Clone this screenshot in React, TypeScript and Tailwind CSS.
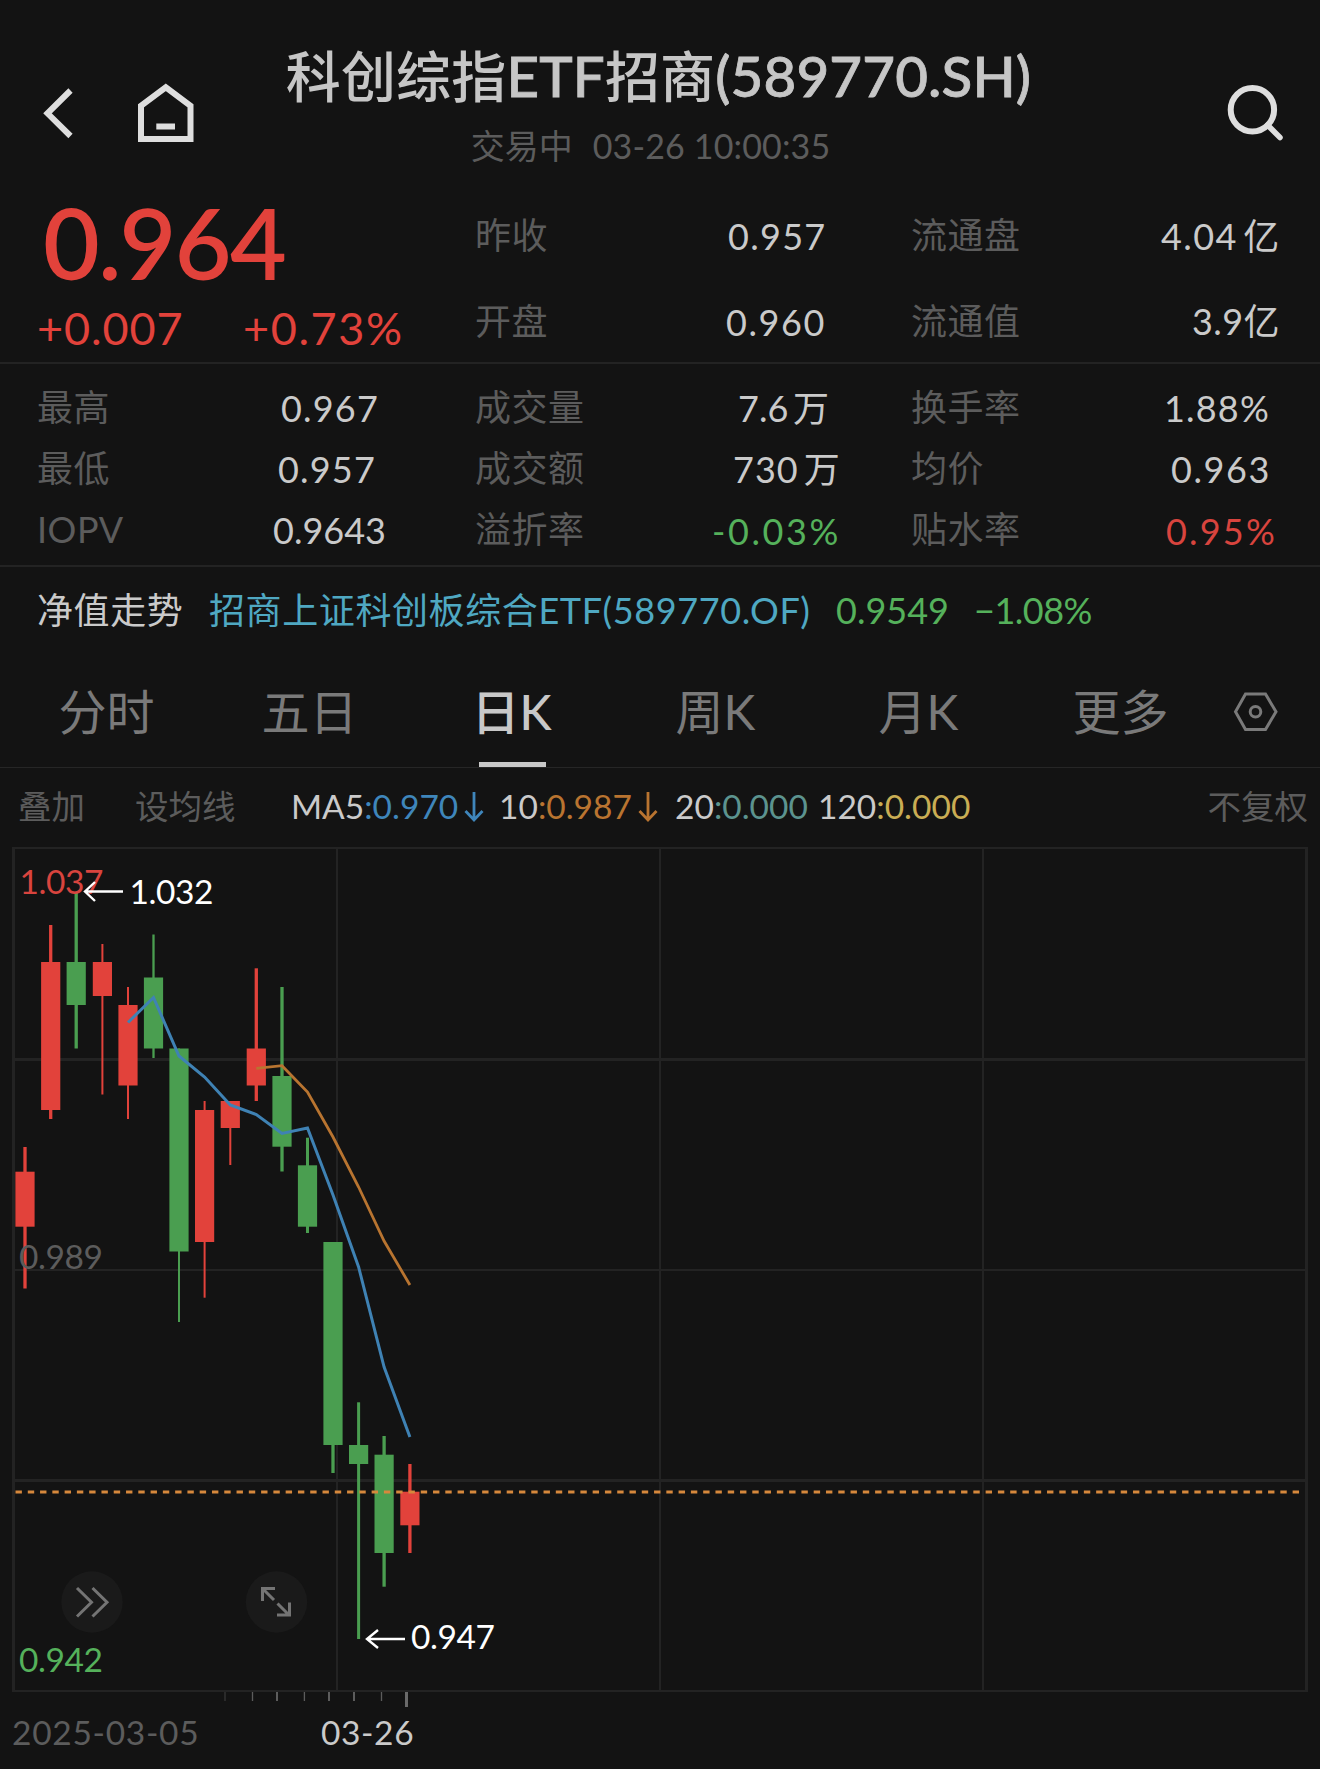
import React from 'react';

const UP = '#e2423b';
const DOWN = '#4a9e50';

type Cell = { label: string; value: string; color?: string; className: string };

const summary: Cell[] = [
  { label: '昨收', value: '0.957', className: 'ml-[108px] pt-px tracking-[1.3px]' },
  { label: '流通盘', value: '4.04 亿', className: 'ml-[105px] pt-px tracking-[1.4px] [word-spacing:-5px]' },
  { label: '开盘', value: '0.960', className: 'ml-[106px] pt-px tracking-[1.6px]' },
  { label: '流通值', value: '3.9亿', className: 'ml-[136px] tracking-[0.4px]' },
];

const details: Cell[] = [
  { label: '最高', value: '0.967', className: 'ml-[99px] pt-[2px] tracking-[1.2px]' },
  { label: '成交量', value: '7.6 万', className: 'ml-[118px] pt-[2px] [word-spacing:-4.5px]' },
  { label: '换手率', value: '1.88%', className: 'ml-[108px] pt-[2px] tracking-[1.2px]' },
  { label: '最低', value: '0.957', className: 'ml-[96px] pt-[3px] tracking-[1.2px]' },
  { label: '成交额', value: '730 万', className: 'ml-[113px] pt-[3px] tracking-[1px] [word-spacing:-5px]' },
  { label: '均价', value: '0.963', className: 'ml-[115px] pt-[3px] tracking-[1.6px]' },
  { label: 'IOPV', value: '0.9643', className: 'ml-[91px] pt-[2px]' },
  { label: '溢折率', value: '-0.03%', color: 'text-[#55b15b]', className: 'ml-[92px] pt-[4px] tracking-[2.6px]' },
  { label: '贴水率', value: '0.95%', color: 'text-[#d8443e]', className: 'ml-[110px] pt-[4px] tracking-[2.2px]' },
];

const tabs = ['分时', '五日', '日K', '周K', '月K', '更多'];

const averages = [
  { name: 'MA5', value: '0.970', arrow: true, box: 'w-[208px]', color: 'text-[#3f86bb]' },
  { name: '10', value: '0.987', arrow: true, box: 'w-[176px]', color: 'text-[#b97430]' },
  { name: '20', value: '0.000', arrow: false, box: 'w-[143px]', color: 'text-[#5c938f]' },
  { name: '120', value: '0.000', arrow: false, box: 'w-[160px]', color: 'text-[#c9ad54]' },
];

// x centre, high, body top, body bottom, low, wick width
const candles: { x: number; high: number; top: number; bottom: number; low: number; w: number; up: boolean }[] = [
  { x: 25, high: 1147, top: 1171.7, bottom: 1226.7, low: 1288.5, w: 3.3, up: true },
  { x: 50.7, high: 925, top: 962, bottom: 1110, low: 1119, w: 3.3, up: true },
  { x: 76.2, high: 893, top: 962, bottom: 1005, low: 1048.5, w: 3.3, up: false },
  { x: 102.4, high: 944, top: 962, bottom: 996, low: 1094.5, w: 2, up: true },
  { x: 128, high: 987, top: 1005, bottom: 1085.5, low: 1119, w: 2, up: true },
  { x: 153.5, high: 934.5, top: 977.5, bottom: 1048.5, low: 1058, w: 2.3, up: false },
  { x: 179, high: 1048.5, top: 1048.5, bottom: 1251.5, low: 1322, w: 2, up: false },
  { x: 204.6, high: 1101, top: 1110, bottom: 1242, low: 1297.7, w: 2, up: true },
  { x: 230.3, high: 1101, top: 1101, bottom: 1128, low: 1165, w: 2, up: true },
  { x: 256.3, high: 968.3, top: 1048.5, bottom: 1085.5, low: 1101, w: 3.3, up: true },
  { x: 282, high: 987, top: 1076, bottom: 1146.7, low: 1171.5, w: 3.3, up: false },
  { x: 307.5, high: 1137.7, top: 1165.3, bottom: 1226.7, low: 1233, w: 3, up: false },
  { x: 333, high: 1242, top: 1242, bottom: 1445, low: 1473, w: 3.3, up: false },
  { x: 358.6, high: 1402.3, top: 1445, bottom: 1464, low: 1639, w: 3, up: false },
  { x: 384.1, high: 1436, top: 1454.7, bottom: 1553, low: 1586.7, w: 3.3, up: false },
  { x: 409.9, high: 1464, top: 1491.7, bottom: 1525.3, low: 1553, w: 3.3, up: true },
];

const ma5 =
  '128,1022.5 153.5,997.5 179,1056 204.6,1077 230.3,1105 256.3,1114.5 282,1133.5 307.5,1128 333,1195 358.6,1267 384.1,1367 409.9,1437';
const ma10 = '256.3,1068.3 282,1065.7 307.5,1092 333,1137 358.6,1187 384.1,1241 409.9,1285';

const ticks = [
  { x: 225, w: 1.5, h: 9, color: '#333333' },
  { x: 252.5, w: 1.3, h: 9, color: '#5c5c5c' },
  { x: 277, w: 2, h: 9, color: '#5c5c5c' },
  { x: 304.4, w: 1.3, h: 9, color: '#5c5c5c' },
  { x: 329, w: 2, h: 9, color: '#5c5c5c' },
  { x: 354, w: 2, h: 9, color: '#5c5c5c' },
  { x: 381.5, w: 1.3, h: 9, color: '#5c5c5c' },
  { x: 406.5, w: 3, h: 15, color: '#6a6a6a' },
];

function Header() {
  return (
    <header className="flex h-[180px] justify-between">
      <div className="flex w-[220px] pt-[80px]">
        <svg className="h-[66px] w-[100px]" viewBox="0 80 100 66" fill="none" stroke="#dedede" strokeWidth="6">
          <path d="M70.5 90.5 L47.5 113.3 L70.5 136" />
        </svg>
        <svg className="h-[66px] w-[120px]" viewBox="100 80 120 66" fill="none" stroke="#dedede" strokeWidth="6">
          <path d="M141 139 V105.8 L165.8 87.3 L190.5 105.8 V139 Z" />
          <path d="M156.3 126.5 H175" />
        </svg>
      </div>
      <div className="flex flex-1 flex-col items-center whitespace-nowrap">
        <h1 className="mt-[35px] mr-[3px] h-[80px] text-[55px]/[80px] font-medium tracking-[0.15px] text-[#c6c6c6]">
          科创综指<span className="text-[56.5px] [-webkit-text-stroke:0.8px]">ETF</span>招商
          <span className="text-[56.5px] [-webkit-text-stroke:0.8px]">(589770.SH)</span>
        </h1>
        <p className="mt-[7px] mr-[19px] flex gap-[20px] text-[34px]/[48px] text-[#5c5c5c]">
          <span>交易中</span>
          <span className="tracking-[0.15px]">03-26 10:00:35</span>
        </p>
      </div>
      <div className="flex w-[220px] justify-end pt-[80px]">
        <svg className="h-[66px] w-[120px]" viewBox="1200 80 120 66" fill="none" stroke="#dedede" strokeWidth="6">
          <circle cx="1252.4" cy="109.7" r="21.7" />
          <path d="M1267.5 125 L1280 137.5" strokeWidth="5.5" strokeLinecap="round" />
        </svg>
      </div>
    </header>
  );
}

function Field({ label, value, color = 'text-[#cacaca]', className }: Cell) {
  return (
    <div className="flex items-center whitespace-nowrap">
      <span className="w-[145px] shrink-0 tracking-[0.5px] text-[#5c5c5c]">{label}</span>
      <span className={`${color} ${className}`}>{value}</span>
    </div>
  );
}

function Quote() {
  return (
    <section className="text-[36px]">
      <div className="flex h-[184px] border-b-2 border-[#232323]">
        <div className="w-[475px] whitespace-nowrap text-[#e2423b]">
          <div className="mt-[3px] ml-[43px] h-[118px] text-[98px]/[118px] font-semibold tracking-[-1.7px]">0.964</div>
          <div className="ml-[37px] flex text-[45px]/[54px]">
            <span className="w-[206px] tracking-[0.9px]">+0.007</span>
            <span className="tracking-[1.6px]">+0.73%</span>
          </div>
        </div>
        <div className="grid flex-1 auto-rows-[86px] grid-cols-[436px_1fr] pt-[12px]">
          {summary.map((cell) => (
            <Field key={cell.label} {...cell} />
          ))}
        </div>
      </div>
      <div className="grid h-[203px] auto-rows-[61px] grid-cols-[438px_436px_1fr] border-b-2 border-[#232323] pt-[12px] pl-[37px]">
        {details.map((cell) => (
          <Field key={cell.label} {...cell} />
        ))}
      </div>
      <div className="flex h-[86px] items-center pl-[37px] whitespace-nowrap">
        <span className="w-[172px] tracking-[0.6px] text-[#cacaca]">净值走势</span>
        <span className="w-[627px] tracking-[0.6px] text-[#4fa8c2]">招商上证科创板综合ETF(589770.OF)</span>
        <span className="w-[138px] text-[#55b15b]">0.9549</span>
        <span className="tracking-[-0.5px] text-[#55b15b]">−1.08%</span>
      </div>
    </section>
  );
}

function Tabs() {
  return (
    <nav className="mt-[2px] flex h-[113px] border-b border-[#262626] pl-[5px] text-[48px]">
      {tabs.map((tab) => {
        const active = tab === '日K';
        return (
          <button
            key={tab}
            className={`flex w-[203px] flex-col items-center justify-between pt-[21px] ${active ? 'font-medium text-[#c8c8c8]' : 'text-[#7a7a7a]'}`}
          >
            <span className={`leading-[72px] ${active || tab === '更多' ? 'pr-[2px]' : ''}`}>{tab}</span>
            {active && <span className="h-[5px] w-[67px] bg-[#c8c8c8]" />}
          </button>
        );
      })}
      <svg className="mt-[30px] ml-[2px] h-[54px] w-[60px]" viewBox="1225 685 60 54" fill="none" stroke="#7a7a7a" strokeWidth="3">
        <path d="M1245.5 694 H1265.5 L1276 711.7 L1265.5 729.5 H1245.5 L1235.5 711.7 Z" />
        <circle cx="1255.5" cy="711.7" r="5.3" />
      </svg>
    </nav>
  );
}

function Averages() {
  return (
    <div className="flex h-[79px] items-center pr-[12px] pb-[2px] pl-[18px] text-[33.5px] whitespace-nowrap text-[#5c5c5c]">
      <span className="w-[117px]">叠加</span>
      <span className="w-[156px]">设均线</span>
      {averages.map((avg) => (
        <span key={avg.name} className={`flex items-center ${avg.box} ${avg.color}`}>
          <span className="text-[#cacaca]">{avg.name}</span>:{avg.value}
          {avg.arrow && (
            <svg className="ml-[6px] h-[32px] w-[20px]" viewBox="0 0 20 32" fill="none" stroke="currentColor" strokeWidth="2.8">
              <path d="M10 1 V29 M1.5 20 L10 29 L18.5 20" />
            </svg>
          )}
        </span>
      ))}
      <span className="ml-auto">不复权</span>
    </div>
  );
}

function Chart() {
  return (
    <svg className="block h-[922px] w-full text-[33.5px]" viewBox="0 847 1320 922">
      <g fill="#232323">
        <rect x="12" y="847" width="1296" height="2" />
        <rect x="12" y="1690" width="1296" height="2" />
        <rect x="12" y="847" width="3" height="845" />
        <rect x="1305" y="847" width="3" height="845" />
        <rect x="336" y="849" width="2" height="841" />
        <rect x="659" y="849" width="2" height="841" />
        <rect x="982" y="849" width="2" height="841" />
        <rect x="15" y="1058" width="1290" height="3" />
        <rect x="15" y="1269" width="1290" height="2" />
        <rect x="15" y="1479" width="1290" height="3" />
      </g>

      {candles.map((c) => (
        <g key={c.x} fill={c.up ? UP : DOWN}>
          <rect x={c.x - c.w / 2} y={c.high} width={c.w} height={c.low - c.high} />
          <rect x={c.x - 9.6} y={c.top} width="19.2" height={c.bottom - c.top} />
        </g>
      ))}

      <polyline points={ma5} fill="none" stroke="#3f82b4" strokeWidth="3" />
      <polyline points={ma10} fill="none" stroke="#b87430" strokeWidth="2.8" />
      <path d="M15.5 1492 H1300" stroke="#d6883c" strokeWidth="3.2" strokeDasharray="6.4 5.88" />

      <g className="tracking-[-0.4px]">
        <text x="129.5" y="903.5" fill="#ffffff">1.032</text>
        <text x="411" y="1649" fill="#ffffff">0.947</text>
        <text x="19.5" y="893.5" fill="#d8443e">1.037</text>
        <text x="19" y="1268.5" fill="#5c5c5c">0.989</text>
        <text x="19" y="1672" fill="#55b15b">0.942</text>
      </g>
      <g fill="none" stroke="#ffffff" strokeWidth="2.4">
        <path d="M123 891.5 H85 M95 882 L85 891.5 L95 901" />
        <path d="M405 1639 H367 M378 1630 L367 1639 L378 1648" />
      </g>

      <circle cx="92" cy="1602" r="30.7" fill="#1a1a1a" />
      <circle cx="276.5" cy="1602" r="30.7" fill="#1a1a1a" />
      <g fill="none" stroke="#747474" strokeWidth="3">
        <path d="M77 1588 L91.5 1602.3 L77 1616.5 M92.5 1588 L107 1602.3 L92.5 1616.5" />
        <path d="M262.5 1601 V1588.5 H275 M263 1589 L274 1600 M277.5 1603.5 L289 1615 M289.5 1602.5 V1615 H277" />
      </g>

      {ticks.map((t) => (
        <rect key={t.x} x={t.x - t.w / 2} y="1692" width={t.w} height={t.h} fill={t.color} />
      ))}
      <text x="12" y="1745" fill="#5c5c5c" className="tracking-[0.7px]">2025-03-05</text>
      <text x="321" y="1745" fill="#cacaca" className="tracking-[0.6px]">03-26</text>
    </svg>
  );
}

export default function App() {
  return (
    <main className="h-[1769px] w-[1320px] overflow-hidden bg-[#131313] font-[Lato,'Noto_Sans_CJK_SC',sans-serif]">
      <Header />
      <Quote />
      <Tabs />
      <Averages />
      <Chart />
    </main>
  );
}
